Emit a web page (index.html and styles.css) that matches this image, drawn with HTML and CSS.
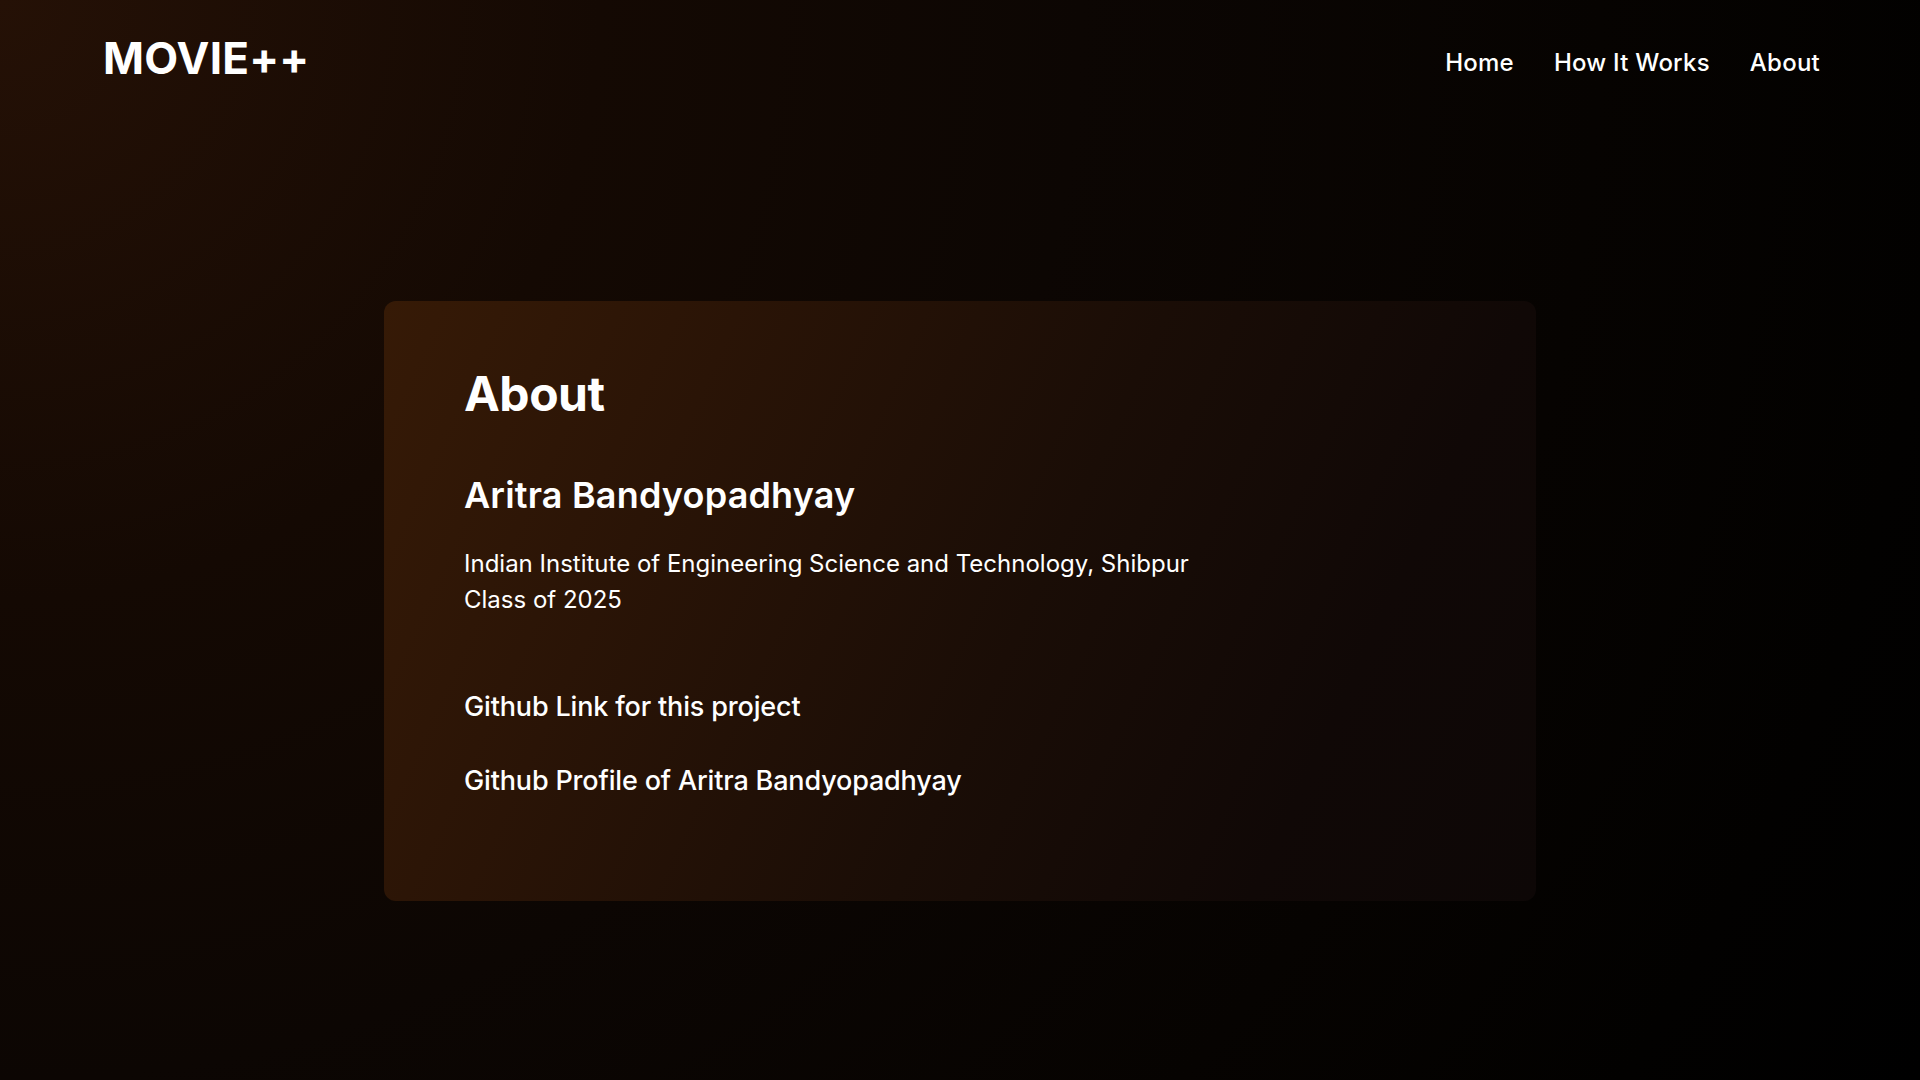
FILE: index.html
```html
<!DOCTYPE html>
<html lang="en">
<head>
<meta charset="utf-8">
<title>MOVIE++ | About</title>
<link rel="stylesheet" href="styles.css">
</head>
<body>
<header class="site-header">
  <div class="logo">MOVIE++</div>
  <nav class="nav">
    <a href="#" class="nav-link">Home</a>
    <a href="#" class="nav-link">How It Works</a>
    <a href="#" class="nav-link">About</a>
  </nav>
</header>
<main class="main">
  <section class="card">
    <h1 class="card-title">About</h1>
    <h2 class="card-name">Aritra Bandyopadhyay</h2>
    <p class="card-info">Indian Institute of Engineering Science and Technology, Shibpur<br>Class of 2025</p>
    <div class="links">
      <a href="#" class="link">Github Link for this project</a>
      <a href="#" class="link">Github Profile of Aritra Bandyopadhyay</a>
    </div>
  </section>
</main>
</body>
</html>
```
FILE: styles.css
```css
* { box-sizing: border-box; }
html, body { margin: 0; padding: 0; }
body {
  width: 1920px;
  height: 1080px;
  overflow: hidden;
  font-family: Inter, "Noto Sans", "Liberation Sans", sans-serif;
  color: #fff;
  background: radial-gradient(circle at 0 0, #251106 0px, #140903 600px, #0c0603 1080px, #060301 1600px, #020100 1950px, #000 2200px);
}
.site-header {
  display: flex;
  justify-content: space-between;
  align-items: flex-start;
  padding: 32px 100px 0 103px;
}
.logo {
  font-size: 44px;
  line-height: 1.2;
  font-weight: 700;
  letter-spacing: 0.005em;
}
.nav {
  display: flex;
  gap: 40px;
  margin-top: 17px;
}
.nav-link {
  color: #fff;
  text-decoration: none;
  font-size: 24px;
  line-height: 1.2;
  font-weight: 500;
  letter-spacing: 0.01em;
}
.main {
  display: flex;
  justify-content: center;
  margin-top: 216px;
}
.card {
  width: 1152px;
  height: 600px;
  border-radius: 12px;
  padding: 64px 80px 0 80px;
  background: linear-gradient(115deg, #361a06 0%, #2a1406 25%, #1a0d06 55%, #100806 80%, #0d0706 100%);
}
.card-title {
  margin: 0;
  font-size: 48px;
  line-height: 1.2;
  font-weight: 700;
  letter-spacing: -0.01em;
}
.card-name {
  margin: 52px 0 0;
  font-size: 36px;
  line-height: 1.2;
  font-weight: 600;
  letter-spacing: 0.005em;
}
.card-info {
  margin: 28px 0 0;
  font-size: 24px;
  line-height: 36px;
  font-weight: 400;
  letter-spacing: 0;
}
.links {
  display: flex;
  flex-direction: column;
  gap: 32px;
  margin-top: 68px;
}
.link {
  color: #fff;
  text-decoration: none;
  font-size: 27px;
  line-height: 42px;
  font-weight: 500;
  letter-spacing: -0.006em;
}
```
